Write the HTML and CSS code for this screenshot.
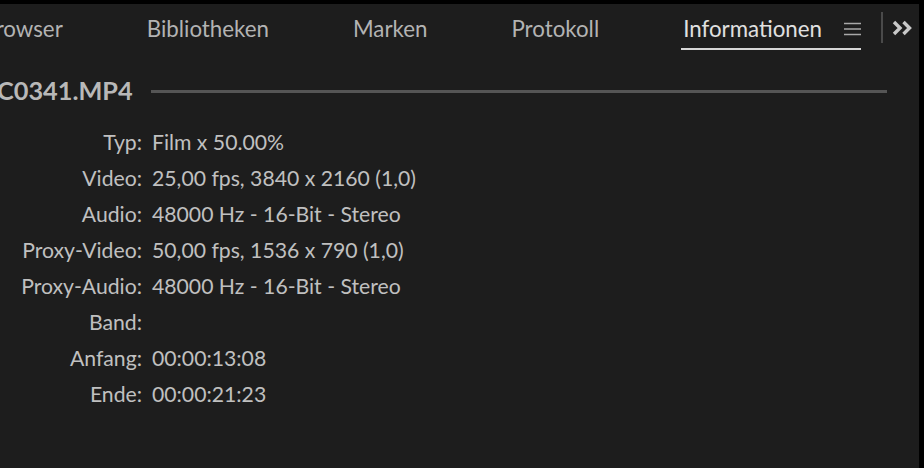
FILE: index.html
```html
<!DOCTYPE html>
<html lang="de">
<head>
<meta charset="utf-8">
<title>Informationen</title>
<link rel="stylesheet" href="styles.css">
</head>
<body>
<div class="panel">
  <div class="tabbar">
    <div class="tabs">
      <div class="tab">Media-Browser</div>
      <div class="tab">Bibliotheken</div>
      <div class="tab">Marken</div>
      <div class="tab">Protokoll</div>
      <div class="tab active">
        <span class="tab-label">Informationen</span>
        <svg class="menu-icon" width="17" height="14" viewBox="0 0 17 14"><path d="M0 1.5H17M0 7H17M0 12.5H17" stroke="#a8a8a8" stroke-width="1.6" fill="none"/></svg>
      </div>
    </div>
    <div class="sep"></div>
    <svg class="more-icon" width="21" height="16" viewBox="0 0 21 16"><path d="M2 2L8 8L2 14M11.5 2L17.5 8L11.5 14" stroke="#c8c8c8" stroke-width="3.4" fill="none" stroke-linejoin="miter"/></svg>
  </div>
  <div class="content">
    <div class="title-row">
      <div class="title">C0341.MP4</div>
      <div class="title-line"></div>
    </div>
    <div class="info">
      <div class="label">Typ:</div><div class="value">Film x 50.00%</div>
      <div class="label">Video:</div><div class="value">25,00 fps, 3840 x 2160 (1,0)</div>
      <div class="label">Audio:</div><div class="value">48000 Hz - 16-Bit - Stereo</div>
      <div class="label">Proxy-Video:</div><div class="value">50,00 fps, 1536 x 790 (1,0)</div>
      <div class="label">Proxy-Audio:</div><div class="value">48000 Hz - 16-Bit - Stereo</div>
      <div class="label">Band:</div><div class="value"></div>
      <div class="label">Anfang:</div><div class="value">00:00:13:08</div>
      <div class="label">Ende:</div><div class="value">00:00:21:23</div>
    </div>
  </div>
</div>
</body>
</html>
```
FILE: styles.css
```css
html, body {
  margin: 0;
  padding: 0;
  background: #000;
}
body {
  width: 924px;
  height: 468px;
  overflow: hidden;
  font-family: Lato, "Noto Sans", sans-serif;
}
.panel {
  margin-top: 4px;
  width: 919px;
  height: 464px;
  background: #1d1d1d;
  overflow: hidden;
}
.tabbar {
  display: flex;
  align-items: center;
  height: 46px;
}
.tabs {
  flex: 1;
  min-width: 0;
  display: flex;
  justify-content: flex-end;
  overflow: hidden;
  gap: 84px;
  height: 100%;
}
.tab {
  flex: none;
  display: flex;
  align-items: center;
  font-size: 22.3px;
  color: #b3b3b3;
  white-space: nowrap;
  height: 100%;
  box-sizing: border-box;
  padding-top: 4px;
  border-bottom: 2px solid transparent;
}
.tab.active {
  color: #e0e0e0;
  border-bottom-color: #d6d6d6;
  margin-left: -2px;
  padding-left: 2px;
  gap: 22px;
}
.menu-icon {
  display: block;
  margin-top: 1px;
}
.sep {
  flex: none;
  width: 2px;
  height: 31px;
  background: #4a4a4a;
  margin: 0 9px 0 20px;
}
.more-icon {
  display: block;
  flex: none;
  margin-right: 6px;
  margin-top: 1px;
}
.content {
  padding-top: 26px;
}
.title-row {
  display: flex;
  align-items: center;
  margin-left: -3px;
}
.title {
  font-size: 25.3px;
  font-weight: 700;
  color: #b8b8b8;
  line-height: 28px;
}
.title-line {
  width: 736px;
  height: 3px;
  background: #555;
  margin-left: 18px;
  margin-top: 2px;
}
.info {
  display: grid;
  grid-template-columns: 142px auto;
  column-gap: 10px;
  grid-auto-rows: 36px;
  margin-top: 20px;
  font-size: 21.2px;
  color: #c0c0c0;
  align-items: center;
}
.label {
  text-align: right;
}
```
